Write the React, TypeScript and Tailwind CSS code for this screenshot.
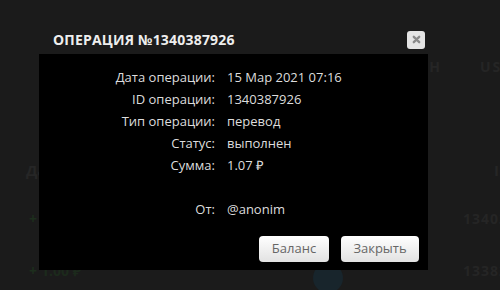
const rows: [string, string][] = [
  ["Дата операции:", "15 Мар 2021 07:16"],
  ["ID операции:", "1340387926"],
  ["Тип операции:", "перевод"],
  ["Статус:", "выполнен"],
  ["Сумма:", "1.07 ₽"],
  ["", ""],
  ["От:", "@anonim"],
];

function PageBehind() {
  // faint page content that shows around the dialog
  return (
    <div className="flex h-full flex-col font-bold text-[#252525]">
      <div className="h-[58px]" />
      <div className="flex h-[16px] items-center justify-end gap-[38px] text-[14px] tracking-[2px]">
        <span>CASH</span>
        <span className="w-[20px] overflow-hidden whitespace-nowrap">USD</span>
      </div>
      <div className="h-[86px]" />
      <div className="flex h-[20px] items-center justify-between pl-[26px] text-[15px]">
        <span className="text-[#262626]">Дата</span>
        <span className="w-[6px] overflow-hidden text-[#262626]">Ii</span>
      </div>
      <div className="h-[30px]" />
      <div className="flex h-[16px] items-center justify-between pl-[29px] text-[14px]">
        <span className="text-[#1d2e1d]">+</span>
        <span className="w-[37px] overflow-hidden tracking-[1px]">13403</span>
      </div>
      <div className="h-[34px]" />
      <div className="flex h-[20px] items-center pl-[29px] text-[14px]">
        <span className="text-[#1d2e1d]">+</span>
        <span className="ml-[4px] text-[#1c2a1c]">1.00 ₽</span>
        <span className="ml-[232px] mt-[16px] h-[30px] w-[30px] rounded-full bg-[#18252c]" />
        <span className="ml-auto w-[37px] overflow-hidden tracking-[1px]">13382</span>
      </div>
    </div>
  );
}

export default function App() {
  return (
    <div
      className="relative h-[290px] w-[500px] overflow-hidden bg-[#1b1b1b]"
      style={{ fontFamily: '"Open Sans", sans-serif' }}
    >
      <PageBehind />

      <div className="absolute left-[39px] top-[25px] w-[389px]">
        <div className="flex h-[29px] items-center justify-between pl-[14px] pr-[3px]">
          <h2 className="text-[14px] font-bold tracking-[0.2px] text-[#eeeeee]">
            ОПЕРАЦИЯ №1340387926
          </h2>
          <button className="flex h-[18px] w-[18px] items-center justify-center rounded-[3px] bg-[#e4e4e4]">
            <svg width="9" height="9" viewBox="0 0 10 10">
              <path d="M2 2 L8 8 M8 2 L2 8" stroke="#8a8a8a" strokeWidth="2.6" strokeLinecap="round" />
            </svg>
          </button>
        </div>

        <div className="bg-black pb-[8px] pt-[12px]">
          <div className="grid grid-cols-[176px_1fr] gap-x-[12px] text-[13px] leading-[22px] text-[#dddddd]">
            {rows.map(([label, value], i) => (
              <div key={i} className="contents">
                <span className="h-[22px] text-right">{label}</span>
                <span className="h-[22px]">{value}</span>
              </div>
            ))}
          </div>

          <div className="mt-[16px] flex justify-end gap-[12px] pr-[9px]">
            <button className="h-[26px] w-[70px] rounded-[4px] bg-gradient-to-b from-white to-[#e2e2e2] text-[13px] text-[#666666]">
              Баланс
            </button>
            <button className="h-[26px] w-[78px] rounded-[4px] bg-gradient-to-b from-white to-[#e2e2e2] text-[13px] text-[#666666]">
              Закрыть
            </button>
          </div>
        </div>
      </div>
    </div>
  );
}
